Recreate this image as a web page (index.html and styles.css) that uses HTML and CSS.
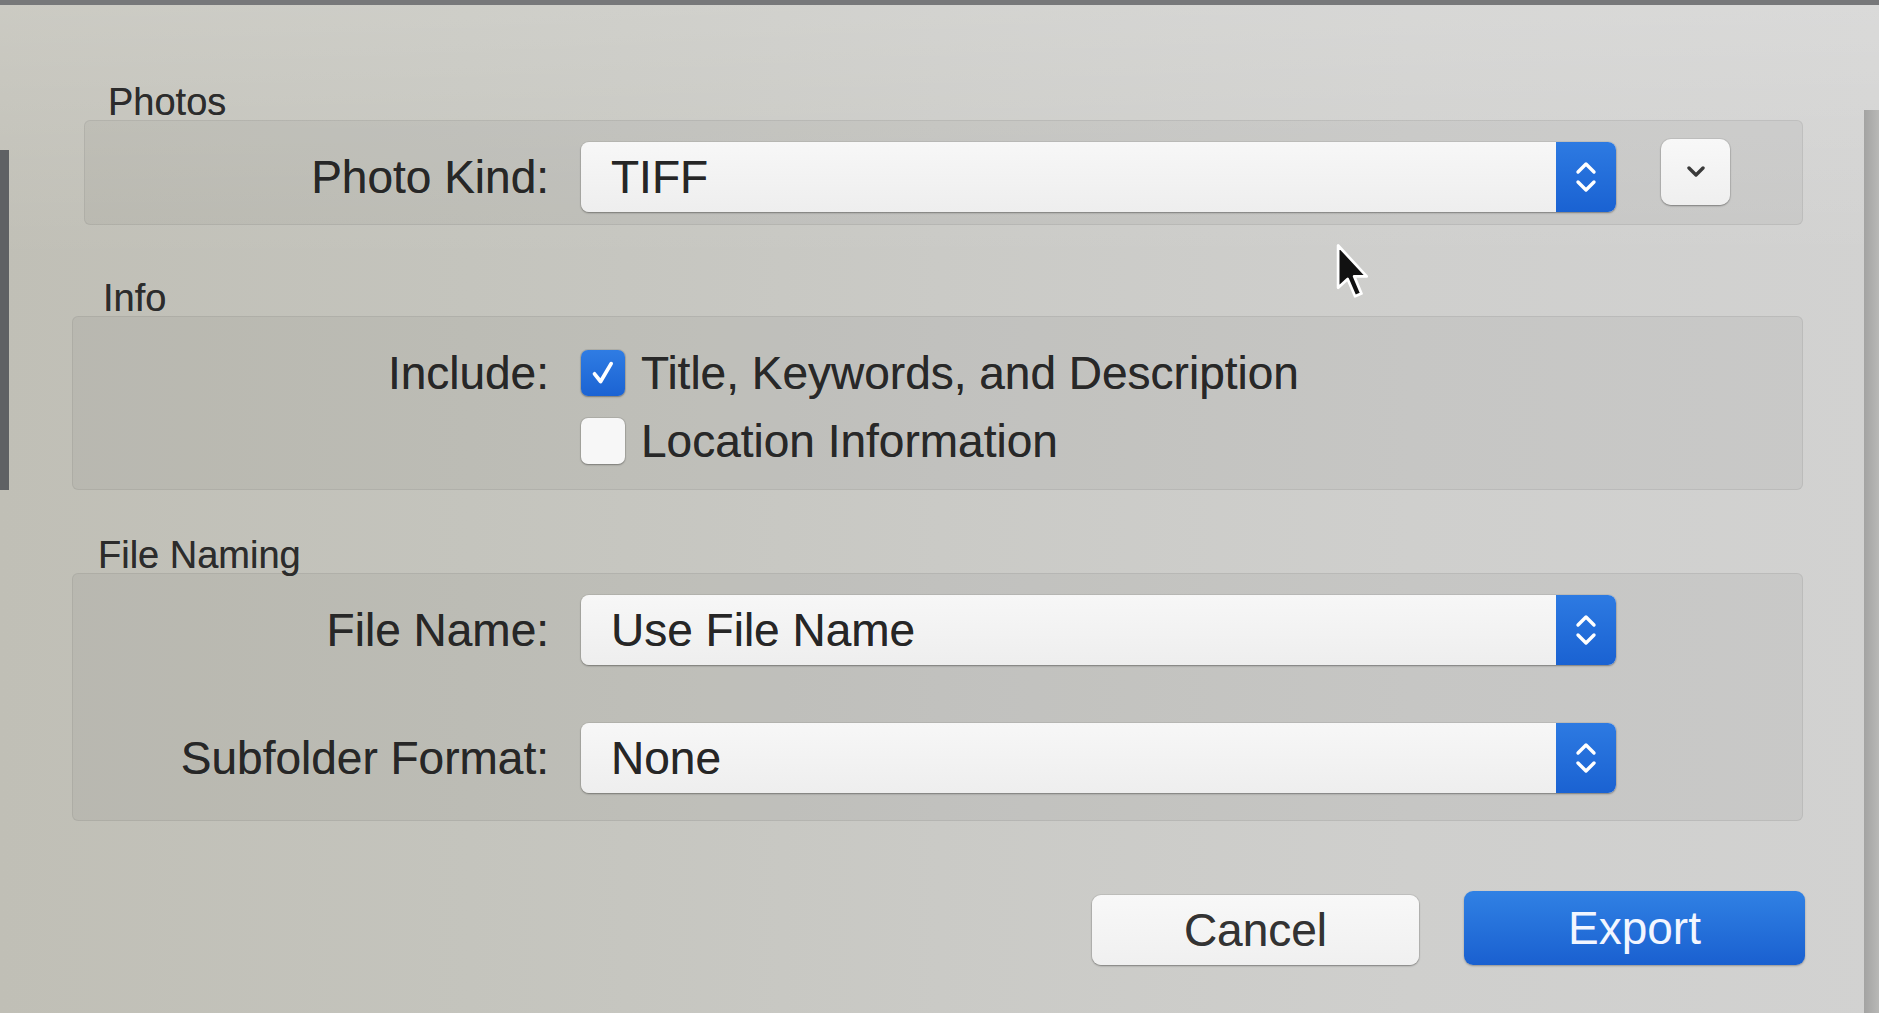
FILE: index.html
```html
<!DOCTYPE html>
<html lang="en">
<head>
<meta charset="utf-8">
<title>Export</title>
<link rel="stylesheet" href="styles.css">
</head>
<body>
<div class="screen">
  <div class="dialog">
    <div class="section-title title-photos">Photos</div>
    <div class="group group-photos">
      <div class="row">
        <div class="label">Photo Kind:</div>
        <div class="popup">
          <span class="popup-value">TIFF</span>
          <span class="stepper"><svg viewBox="0 0 26 44" width="26" height="44"><path d="M5 17 L13 9 L21 17" /><path d="M5 27 L13 35 L21 27" /></svg></span>
        </div>
        <div class="disclosure"><svg viewBox="0 0 20 12" width="20" height="12"><path d="M3 2 L10 9 L17 2" /></svg></div>
      </div>
    </div>

    <div class="section-title title-info">Info</div>
    <div class="group group-info">
      <div class="row">
        <div class="label">Include:</div>
        <div class="check"><span class="box checked"><svg viewBox="0 0 20 20" width="34" height="34"><path d="M5 10.5 L8.6 15 L14.8 4.5" /></svg></span><span>Title, Keywords, and Description</span></div>
      </div>
      <div class="row">
        <div class="label"></div>
        <div class="check"><span class="box"></span><span>Location Information</span></div>
      </div>
    </div>

    <div class="section-title title-naming">File Naming</div>
    <div class="group group-naming">
      <div class="row">
        <div class="label">File Name:</div>
        <div class="popup">
          <span class="popup-value">Use File Name</span>
          <span class="stepper"><svg viewBox="0 0 26 44" width="26" height="44"><path d="M5 17 L13 9 L21 17" /><path d="M5 27 L13 35 L21 27" /></svg></span>
        </div>
      </div>
      <div class="row">
        <div class="label">Subfolder Format:</div>
        <div class="popup">
          <span class="popup-value">None</span>
          <span class="stepper"><svg viewBox="0 0 26 44" width="26" height="44"><path d="M5 17 L13 9 L21 17" /><path d="M5 27 L13 35 L21 27" /></svg></span>
        </div>
      </div>
    </div>

    <div class="buttons">
      <div class="btn btn-cancel">Cancel</div>
      <div class="btn btn-export">Export</div>
    </div>
  </div>

  <svg class="cursor" viewBox="0 0 17 28" width="36" height="60"><path d="M1 1 L1 21 L5.5 16.8 L9 25 L12 23.7 L8.6 15.6 L14.5 15.6 Z" /></svg>
</div>
</body>
</html>
```

FILE: styles.css
```css
* { box-sizing: border-box; }

html, body {
  margin: 0;
  padding: 0;
}

body {
  width: 1879px;
  height: 1013px;
  overflow: hidden;
  font-family: "Liberation Sans", Arial, sans-serif;
  color: #2a2a2a;
  background:
    linear-gradient(#5f6164, #5f6164) 0 150px / 9px 340px no-repeat,
    linear-gradient(to right, #a3a3a2, #b8b8b6) 1864px 110px / 15px 903px no-repeat,
    linear-gradient(to bottom, rgba(255,255,255,0.18) 0px, rgba(255,255,255,0) 260px),
    linear-gradient(to right, #c0bfb6 0%, #c4c4bd 25%, #cacac6 50%, #cfcfcd 75%, #d2d2d1 100%);
}

.screen {
  position: relative;
  width: 1879px;
  height: 1013px;
  border-top: 5px solid #77787a;
}

.dialog {
  padding: 79px 76px 0 72px;
}

.section-title {
  font-size: 38px;
  line-height: 36px;
  height: 36px;
  padding-left: 36px;
  color: #2c2c2c;
  text-shadow: 0 0 0.6px rgba(0,0,0,0.5);
}

.title-info { margin-top: 55px; padding-left: 31px; }
.title-naming { margin-top: 47px; padding-left: 26px; }

.group {
  width: 1731px;
  background: rgba(90, 90, 80, 0.07);
  border: 1px solid rgba(80, 80, 80, 0.10);
  border-radius: 6px;
}

.group-photos {
  padding: 21px 0 12px;
  margin-left: 12px;
  width: 1719px;
}
.group-info { padding: 33px 0 25px; }
.group-naming { padding: 21px 0 27px; }

.row {
  display: grid;
  grid-template-columns: 476px 1035px auto;
  column-gap: 32px;
  align-items: center;
}
.group-photos .row { grid-template-columns: 464px 1035px auto; }

.group-info .row + .row { margin-top: 22px; }
.group-naming .row + .row { margin-top: 58px; }

.label {
  font-size: 46px;
  line-height: 46px;
  text-align: right;
  color: #272727;
  text-shadow: 0 0 0.6px rgba(0,0,0,0.5);
}

.popup {
  display: flex;
  height: 70px;
  border-radius: 8px;
  background: linear-gradient(to bottom, #f7f7f7, #eeeeee);
  box-shadow: 0 1px 2px rgba(0,0,0,0.35), 0 0 0 1px rgba(0,0,0,0.05);
  overflow: hidden;
}

.popup-value {
  flex: 1;
  display: flex;
  align-items: center;
  padding-left: 30px;
  font-size: 46px;
  color: #262626;
  text-shadow: 0 0 0.6px rgba(0,0,0,0.5);
}

.stepper {
  width: 60px;
  display: flex;
  align-items: center;
  justify-content: center;
  background: linear-gradient(to bottom, #2d7ae2, #1a62d2);
}
.stepper svg path {
  fill: none;
  stroke: #ffffff;
  stroke-width: 3.4;
  stroke-linecap: round;
  stroke-linejoin: round;
}

.disclosure {
  width: 69px;
  height: 66px;
  margin-left: 13px;
  margin-top: -10px;
  border-radius: 10px;
  background: linear-gradient(to bottom, #f8f8f8, #efefef);
  box-shadow: 0 1px 2px rgba(0,0,0,0.35), 0 0 0 1px rgba(0,0,0,0.05);
  display: flex;
  align-items: center;
  justify-content: center;
}
.disclosure svg path {
  fill: none;
  stroke: #3a3a3a;
  stroke-width: 3.4;
  stroke-linecap: round;
  stroke-linejoin: round;
}

.check {
  display: flex;
  align-items: center;
  gap: 16px;
  font-size: 46px;
  line-height: 46px;
  color: #282828;
  text-shadow: 0 0 0.6px rgba(0,0,0,0.5);
}

.box {
  width: 44px;
  height: 46px;
  border-radius: 7px;
  background: #f7f7f7;
  box-shadow: 0 1px 2px rgba(0,0,0,0.3), 0 0 0 1px rgba(0,0,0,0.08);
  display: flex;
  align-items: center;
  justify-content: center;
  flex: none;
}
.box.checked {
  background: linear-gradient(to bottom, #2f7ce3, #1b63d3);
}
.box.checked svg path {
  fill: none;
  stroke: #ffffff;
  stroke-width: 2.2;
  stroke-linecap: round;
  stroke-linejoin: round;
}

.buttons {
  display: flex;
  justify-content: flex-end;
  gap: 45px;
  margin-top: 74px;
  margin-right: -2px;
}

.btn {
  height: 70px;
  border-radius: 9px;
  font-size: 46px;
  display: flex;
  align-items: center;
  justify-content: center;
  text-shadow: 0 0 0.6px rgba(0,0,0,0.4);
}
.btn-cancel {
  width: 327px;
  background: linear-gradient(to bottom, #f8f8f8, #f0f0f0);
  box-shadow: 0 1px 2px rgba(0,0,0,0.35), 0 0 0 1px rgba(0,0,0,0.06);
  color: #333333;
}
.btn-export {
  width: 341px;
  margin-top: -4px;
  height: 74px;
  background: linear-gradient(to bottom, #3081e4, #1a60d0);
  box-shadow: 0 1px 2px rgba(0,0,0,0.3);
  color: #f2f6ff;
  text-shadow: none;
}

.cursor {
  position: absolute;
  left: 1336px;
  top: 238px;
}
.cursor path {
  fill: #111111;
  stroke: #ffffff;
  stroke-width: 1.3;
  stroke-linejoin: round;
}
```
